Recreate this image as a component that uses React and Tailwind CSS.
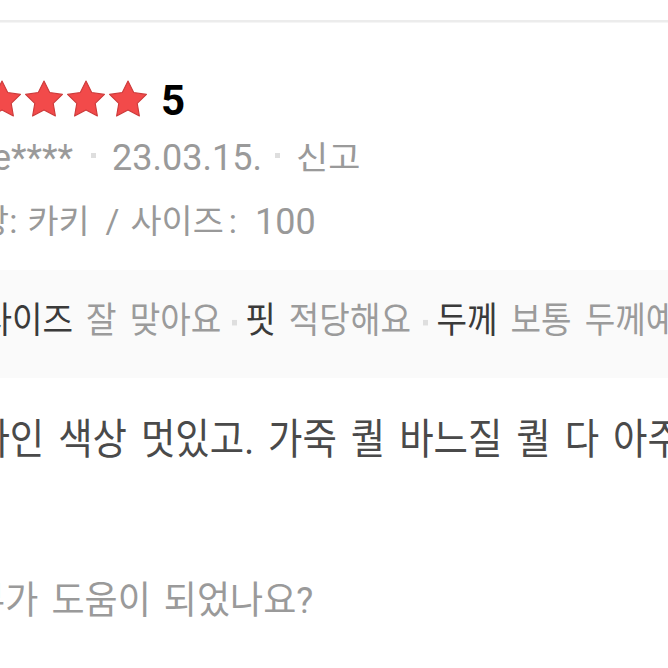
function Star() {
  return (
    <svg width="38" height="37" viewBox="1.7 1.5 20.6 19.6" className="shrink-0">
      <path
        d="M12 1.8l3.09 6.26 6.91 1.01-5 4.87 1.18 6.88L12 17.57l-6.18 3.25L7 13.94 2 9.07l6.91-1.01L12 1.8z"
        fill="#f24a4a"
        stroke="#cc3a3a"
        strokeWidth="0.6"
        strokeLinejoin="round"
      />
    </svg>
  );
}

function Dot({ cls }) {
  return <span className={`block w-[5px] h-[5px] bg-[#dedede] shrink-0 ${cls}`} />;
}

export default function App() {
  return (
    <div className="w-[668px] h-[668px] overflow-hidden bg-white font-['Roboto','Noto_Sans_CJK_KR',sans-serif]">
      <div className="h-[20px]" />
      <div className="h-[2px] bg-[#ececec]" />
      <div className="h-[1px] bg-[#f5f5f5]" />

      {/* rating */}
      <div className="mt-[56px] h-[38px] flex items-center whitespace-nowrap">
        <div className="ml-[-59px] flex items-center gap-[4px] shrink-0">
          <Star />
          <Star />
          <Star />
          <Star />
          <Star />
        </div>
        <span className="ml-[14px] mt-[5px] text-[42px] font-bold leading-none text-black shrink-0">5</span>
      </div>

      {/* meta */}
      <div className="mt-[21px] h-[40px] flex items-center whitespace-nowrap leading-none text-[#9a9a9a]">
        <span className="ml-[-8px] text-[36px] shrink-0">e****</span>
        <Dot cls="ml-[18px] mb-[6px]" />
        <span className="ml-[16px] text-[36px] shrink-0">23.03.15.</span>
        <Dot cls="ml-[13px] mb-[5px]" />
        <span className="ml-[16px] text-[35px] scale-y-[0.9] shrink-0">신고</span>
      </div>

      {/* option */}
      <div className="mt-[24px] h-[40px] flex items-center whitespace-nowrap leading-none text-[#999999]">
        <div className="flex items-center text-[33.8px] scale-y-[0.97] shrink-0">
          <span className="ml-[-53px] shrink-0">색상</span>
          <span className="ml-[0px] shrink-0">:</span>
          <span className="ml-[10px] shrink-0">카키</span>
          <span className="ml-[16px] shrink-0">/</span>
          <span className="ml-[11px] shrink-0">사이즈</span>
          <span className="ml-[5px] shrink-0">:</span>
        </div>
        <span className="ml-[18px] text-[36px] shrink-0">100</span>
      </div>

      {/* summary band */}
      <div className="mt-[28px] h-[108px] bg-[#fafafa] flex items-center pb-[6px] overflow-hidden">
        <div className="flex items-center whitespace-nowrap leading-none text-[33.2px] [word-spacing:4.8px] scale-y-[1.1] shrink-0">
          <span className="ml-[-18.5px] text-[#3a3a3a] shrink-0">사이즈</span>
          <span className="ml-[13px] text-[#9b9b9b] shrink-0">잘 맞아요</span>
          <Dot cls="ml-[11px] mt-[4px]" />
          <span className="ml-[8px] text-[#3a3a3a] shrink-0">핏</span>
          <span className="ml-[13px] text-[#9b9b9b] shrink-0">적당해요</span>
          <Dot cls="ml-[12.5px] mt-[4px]" />
          <span className="ml-[8px] text-[#3a3a3a] shrink-0">두께</span>
          <span className="ml-[13px] text-[#9b9b9b] shrink-0">보통 두께예요</span>
        </div>
      </div>

      {/* body */}
      <div className="mt-[43px] h-[40px] flex items-center">
        <div className="ml-[-59px] whitespace-nowrap leading-none text-[37.4px] [word-spacing:4.7px] text-[#4a4a4a] scale-y-[1.12] shrink-0">
          디자인 색상 멋있고. 가죽 퀄 바느질 퀄 다 아주 좋아요
        </div>
      </div>

      {/* helpful */}
      <div className="mt-[119px] h-[40px] flex items-center">
        <div className="ml-[-61px] whitespace-nowrap leading-none text-[36px] [word-spacing:4.1px] text-[#9a9a9a] scale-y-[1.05] shrink-0">
          리뷰가 도움이 되었나요?
        </div>
      </div>
    </div>
  );
}
